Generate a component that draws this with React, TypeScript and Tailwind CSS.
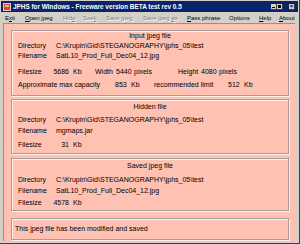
import React from "react";

const font = { fontFamily: '"Liberation Sans", Arial, sans-serif' };

function Panel({ className, children }: { className: string; children: React.ReactNode }) {
  return (
    <div
      className={`ml-[7px] mr-[6px] border border-[#a89c98] shadow-[inset_1px_1px_0_#fff0ec,1px_1px_0_#fff0ec] ${className}`}
    >
      {children}
    </div>
  );
}

export default function App() {
  return (
    <div
      className="w-[300px] h-[244px] bg-[#d4d0c8] flex flex-col text-[7px] leading-[10px] text-black overflow-hidden border-r border-b border-[#404040]"
      style={font}
    >
      {/* Title bar */}
      <div className="h-[11px] mx-[1px] mt-[1px] bg-[#0a246a] flex items-center pl-[2px] pr-[3px]">
        <svg width="8" height="8" viewBox="0 0 8 8" className="shrink-0">
          <rect x="0" y="0" width="8" height="8" fill="#d4d0c8" />
          <rect x="1" y="1" width="6" height="6" fill="#e04040" />
          <rect x="2" y="2" width="4" height="2" fill="#f0c040" />
        </svg>
        <span className="ml-[2px] text-white font-bold text-[6.4px] leading-[10px] whitespace-nowrap">
          JPHS for WIndows - Freeware version BETA test rev 0.5
        </span>
        <div className="ml-auto flex items-center">
          <div className="w-[6px] h-[6px] bg-[#d4d0c8] border-r border-b border-[#404040] flex items-end justify-center pb-[1px]">
            <div className="w-[3px] h-[1px] bg-black" />
          </div>
          <div className="w-[6px] h-[6px] bg-[#d4d0c8] border-r border-b border-[#404040] flex items-center justify-center">
            <div className="w-[3px] h-[3px] border border-t-2 border-black" />
          </div>
          <div className="ml-[6px] w-[6px] h-[6px] bg-[#d4d0c8] border-r border-b border-[#404040] flex items-center justify-center text-[6px] leading-[6px] font-bold">
            ×
          </div>
        </div>
      </div>

      {/* Menu bar */}
      <div className="h-[11px] flex items-center whitespace-nowrap text-[6px] leading-[10px] pl-[5px]">
        <span className="w-[20px]">E<span className="underline">x</span>it</span>
        <span className="w-[38px]"><span className="underline">O</span>pen jpeg</span>
        <span className="w-[20px] text-[#808080] [text-shadow:1px_1px_0_#fff]">Hid<span className="underline">e</span></span>
        <span className="w-[23px] text-[#808080] [text-shadow:1px_1px_0_#fff]">See<span className="underline">k</span></span>
        <span className="w-[37px] text-[#808080] [text-shadow:1px_1px_0_#fff]">Save jpeg</span>
        <span className="w-[44px] text-[#808080] [text-shadow:1px_1px_0_#fff]">Save jpeg <span className="underline">a</span>s</span>
        <span className="w-[42px]"><span className="underline">P</span>ass phrase</span>
        <span className="w-[30px]">Options</span>
        <span className="w-[20px]"><span className="underline">H</span>elp</span>
        <span><span className="underline">A</span>bout</span>
      </div>

      {/* Client area */}
      <div className="flex-1 ml-[3px] mr-[4px] mb-[2px] bg-[#ffc2b2] flex flex-col pt-[6px] border-l border-t border-[#a08c88]">
        {/* Input jpeg file */}
        <Panel className="h-[66px] flex flex-col">
          <div className="text-center">Input jpeg file</div>
          <div className="flex pl-[6px]">
            <span className="w-[38px]">Directory</span>
            <span>C:\Krupin\Gid\STEGANOGRAPHY\jphs_05\test</span>
          </div>
          <div className="flex pl-[6px]">
            <span className="w-[38px]">Filename</span>
            <span>SatL10_Prod_Full_Dec04_12.jpg</span>
          </div>
          <div className="flex pl-[6px] mt-[6px] whitespace-nowrap">
            <span className="w-[35px]">Filesize</span>
            <span className="w-[16px] text-right">5686</span>
            <span className="ml-[4px] w-[22px]">Kb</span>
            <span className="w-[21px]">Width</span>
            <span className="w-[18px]">5440</span>
            <span className="w-[44px]">pixels</span>
            <span className="w-[23px]">Height</span>
            <span className="w-[18px]">4080</span>
            <span>pixels</span>
          </div>
          <div className="flex pl-[6px] mt-[3px] whitespace-nowrap">
            <span className="w-[97px]">Approximate max capacity</span>
            <span className="w-[12px]">853</span>
            <span className="ml-[4px] w-[23px]">Kb</span>
            <span className="w-[74px]">recommended limit</span>
            <span className="w-[12px]">512</span>
            <span className="ml-[4px]">Kb</span>
          </div>
        </Panel>

        {/* Hidden file */}
        <Panel className="mt-[3px] h-[55px] flex flex-col">
          <div className="text-center mt-[2px]">Hidden file</div>
          <div className="flex pl-[6px] mt-[3px]">
            <span className="w-[38px]">Directory</span>
            <span>C:\Krupin\Gid\STEGANOGRAPHY\jphs_05\test</span>
          </div>
          <div className="flex pl-[6px] mt-[1px]">
            <span className="w-[38px]">Filename</span>
            <span>mgmaps.jar</span>
          </div>
          <div className="flex pl-[6px] mt-[4px] whitespace-nowrap">
            <span className="w-[35px]">Filesize</span>
            <span className="w-[16px] text-right">31</span>
            <span className="ml-[4px]">Kb</span>
          </div>
        </Panel>

        {/* Saved jpeg file */}
        <Panel className="mt-[4px] h-[53px] flex flex-col">
          <div className="text-center mt-[2px]">Saved jpeg file</div>
          <div className="flex pl-[6px] mt-[4px]">
            <span className="w-[38px]">Directory</span>
            <span>C:\Krupin\Gid\STEGANOGRAPHY\jphs_05\test</span>
          </div>
          <div className="flex pl-[6px] mt-[1px]">
            <span className="w-[38px]">Filename</span>
            <span>SatL10_Prod_Full_Dec04_12.jpg</span>
          </div>
          <div className="flex pl-[6px] mt-[2px] whitespace-nowrap">
            <span className="w-[35px]">Filesize</span>
            <span className="w-[16px] text-right">4578</span>
            <span className="ml-[4px]">Kb</span>
          </div>
        </Panel>

        {/* Message */}
        <Panel className="mt-[7px] h-[22px] flex items-center">
          <span className="pl-[3px]">This jpeg file has been modified and saved</span>
        </Panel>
      </div>
    </div>
  );
}
